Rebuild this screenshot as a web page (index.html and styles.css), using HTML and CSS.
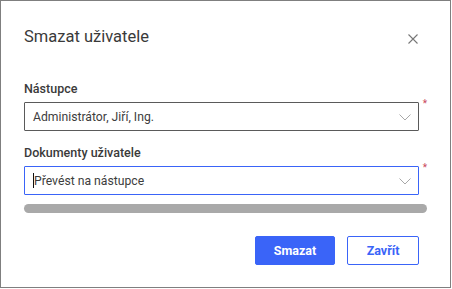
FILE: index.html
```html
<!DOCTYPE html>
<html lang="cs">
<head>
<meta charset="utf-8">
<title>Smazat uživatele</title>
<link rel="stylesheet" href="styles.css">
</head>
<body>
<div class="dialog">
  <div class="header">
    <h1 class="title">Smazat uživatele</h1>
    <button class="close" aria-label="Zavřít">
      <svg width="10" height="10" viewBox="0 0 10 10"><path d="M0.5 0.5L9.5 9.5M9.5 0.5L0.5 9.5" stroke="#777" stroke-width="1.1" fill="none"/></svg>
    </button>
  </div>
  <div class="field first">
    <label class="label">Nástupce</label>
    <div class="row">
      <div class="select">
        <span class="value">Administrátor, Jiří, Ing.</span>
        <svg class="chev" width="12" height="7" viewBox="0 0 12 7"><path d="M0.5 0.5L6 6L11.5 0.5" stroke="#a8a8a8" stroke-width="1" fill="none"/></svg>
      </div>
      <span class="req">*</span>
    </div>
  </div>
  <div class="field second">
    <label class="label">Dokumenty uživatele</label>
    <div class="row">
      <div class="select focus">
        <span class="caret"></span><span class="value">Převést na nástupce</span>
        <svg class="chev" width="12" height="7" viewBox="0 0 12 7"><path d="M0.5 0.5L6 6L11.5 0.5" stroke="#a8a8a8" stroke-width="1" fill="none"/></svg>
      </div>
      <span class="req">*</span>
    </div>
  </div>
  <div class="scrollbar"></div>
  <div class="footer">
    <button class="btn primary">Smazat</button>
    <button class="btn secondary">Zavřít</button>
  </div>
</div>
</body>
</html>
```
FILE: styles.css
```css
html, body {
  margin: 0;
  padding: 0;
  background: #fff;
}
body {
  font-family: Roboto, "Liberation Sans", Arial, sans-serif;
  color: #333;
}
.dialog {
  box-sizing: border-box;
  width: 451px;
  height: 288px;
  border: 1px solid #7f7f7f;
  padding: 0 23px;
  display: flex;
  flex-direction: column;
  background: #fff;
}
.header {
  margin-top: 26px;
  height: 20px;
  display: flex;
  align-items: center;
  justify-content: space-between;
}
.title {
  margin: 0;
  font-size: 16.5px;
  line-height: 20px;
  font-weight: 400;
  color: #3a3a3a;
}
.close {
  border: 0;
  background: none;
  padding: 0;
  width: 10px;
  height: 10px;
  margin-right: 9px;
  margin-top: 3px;
  display: flex;
}
.field.first { margin-top: 34px; }
.field.second { margin-top: 14px; }
.label {
  display: block;
  font-size: 12.5px;
  line-height: 16px;
  font-weight: 500;
  color: #3a3a3a;
  margin-bottom: 5px;
}
.row {
  display: flex;
  align-items: flex-start;
}
.select {
  box-sizing: border-box;
  width: 395px;
  height: 29px;
  border: 1px solid #5a5a5a;
  border-radius: 1px;
  display: flex;
  align-items: center;
  padding: 0 7px 0 8px;
  font-size: 12.2px;
  color: #3d3d3d;
}
.select.focus { border-color: #3a64f8; }
.value { flex: 1; }
.caret {
  width: 1px;
  height: 15px;
  background: #111;
}
.chev { display: block; margin-top: 1px; }
.req {
  color: #c8465a;
  font-size: 10px;
  line-height: 10px;
  margin-left: 4px;
  margin-top: -3px;
}
.scrollbar {
  margin-top: 9px;
  width: 403px;
  height: 9px;
  border-radius: 5px;
  background: #a9a9a9;
}
.footer {
  margin-top: 23px;
  display: flex;
  justify-content: flex-end;
  gap: 12px;
  padding-right: 8px;
}
.btn {
  box-sizing: border-box;
  height: 29px;
  border-radius: 2px;
  font-family: Roboto, "Liberation Sans", Arial, sans-serif;
  font-size: 12.5px;
  font-weight: 700;
  cursor: pointer;
}
.btn.primary {
  width: 80px;
  background: #3a64f8;
  border: 1px solid #3a64f8;
  color: #fff;
}
.btn.secondary {
  width: 72px;
  background: #fff;
  border: 1px solid #3a64f8;
  color: #3a64f8;
}
```
